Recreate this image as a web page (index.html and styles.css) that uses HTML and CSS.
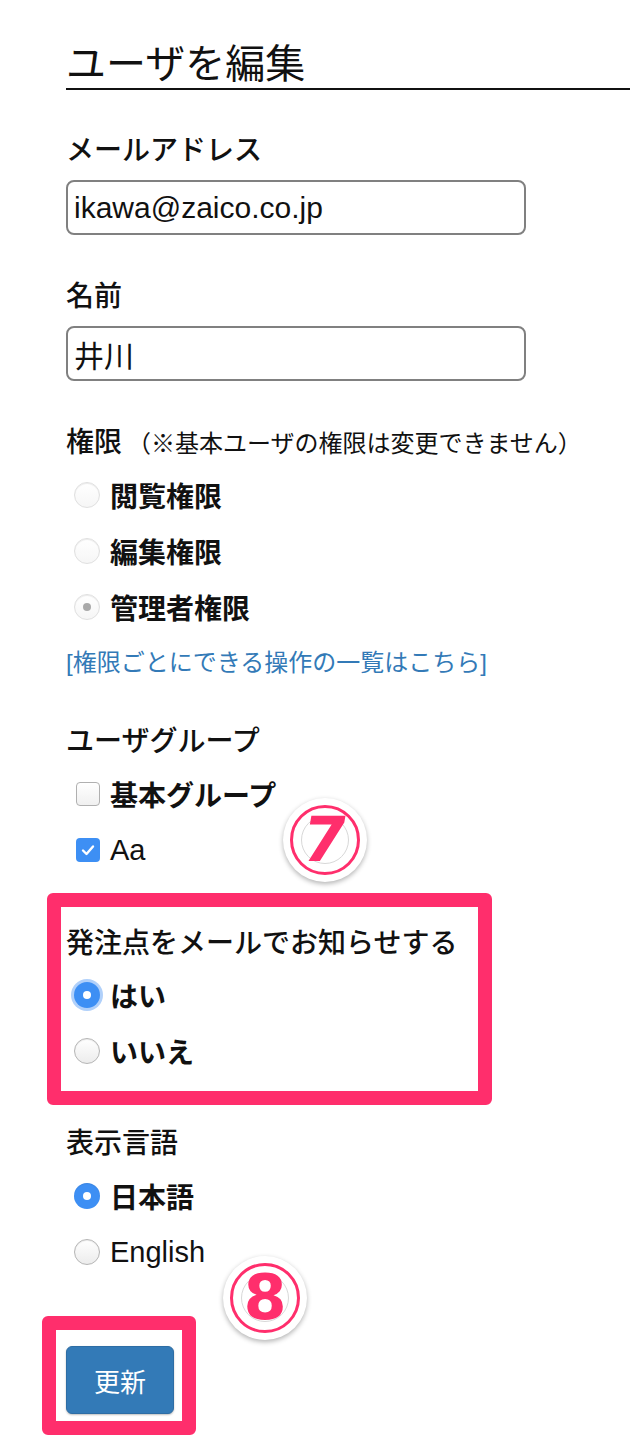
FILE: index.html
```html
<!DOCTYPE html>
<html lang="ja">
<head>
    <meta charset="UTF-8">
    <meta name="viewport" content="width=device-width, initial-scale=1.0">
    <title>ユーザを編集</title>
    <link rel="stylesheet" href="styles.css">
</head>
<body>

    <div class="page">
        <h1 class="title">ユーザを編集</h1>

        <!-- Email -->
        <div class="field field-email">
            <div class="label">メールアドレス</div>
            <input class="text-input" type="text" value="ikawa@zaico.co.jp">
        </div>

        <!-- Name -->
        <div class="field">
            <div class="label">名前</div>
            <input class="text-input" type="text" value="井川">
        </div>

        <!-- Role -->
        <div class="field">
            <div class="label">権限<span class="note">（※基本ユーザの権限は変更できません）</span></div>
            <div class="options tight">
                <div class="option"><span class="radio disabled"></span>閲覧権限</div>
                <div class="option"><span class="radio disabled"></span>編集権限</div>
                <div class="option"><span class="radio disabled checked"></span>管理者権限</div>
            </div>
            <a class="link" href="#">[権限ごとにできる操作の一覧はこちら]</a>
        </div>

        <!-- User groups -->
        <div class="field group-field">
            <div class="label">ユーザグループ</div>
            <div class="options">
                <div class="option"><span class="check"></span>基本グループ</div>
                <div class="option latin"><span class="check checked">
                    <svg width="16" height="16" viewBox="0 0 16 16"><path d="M3 8.5 L6.5 12 L13 4.5" fill="none" stroke="#fff" stroke-width="2.4" stroke-linecap="round" stroke-linejoin="round"/></svg>
                </span>Aa</div>
            </div>
            <div class="badge badge-7"><span class="badge-ring"></span><span class="badge-num skew">7</span></div>
        </div>

        <!-- Reorder point mail -->
        <div class="field highlight">
            <div class="label">発注点をメールでお知らせする</div>
            <div class="options tight">
                <div class="option"><span class="radio checked focus"></span>はい</div>
                <div class="option"><span class="radio"></span>いいえ</div>
            </div>
        </div>

        <!-- Language -->
        <div class="field field-lang">
            <div class="label">表示言語</div>
            <div class="options">
                <div class="option"><span class="radio checked"></span>日本語</div>
                <div class="option latin"><span class="radio"></span>English</div>
            </div>
        </div>

        <!-- Submit -->
        <div class="actions">
            <button class="btn">更新</button>
            <div class="badge badge-8"><span class="badge-ring"></span><span class="badge-num">8</span></div>
        </div>
    </div>

</body>
</html>
```

FILE: styles.css
```css
/* General styles */
body {
    margin: 0;
    font-family: "Liberation Sans", "Noto Sans CJK JP", sans-serif;
    color: #111;
    background-color: #fff;
}
.page {
    padding: 0 0 30px 66px;
}
.title {
    margin: 40px 0 0;
    font-size: 40px;
    font-weight: 400;
    line-height: 48px;
    border-bottom: 2px solid #111;
}

/* Form fields */
.field {
    position: relative;
    margin-top: 42px;
}
.field-email {
    margin-top: 41px;
}
.group-field {
    margin-top: 39px;
}
.highlight {
    margin-top: 46px;
}
.field-lang {
    margin-top: 45px;
}
.label {
    font-size: 28px;
    font-weight: 500;
    line-height: 40px;
}
.note {
    font-size: 24px;
    font-weight: 400;
    margin-left: 5px;
}
.text-input {
    display: block;
    box-sizing: border-box;
    width: 460px;
    height: 55px;
    margin-top: 9px;
    padding: 0 6px;
    border: 2px solid #808080;
    border-radius: 8px;
    font-family: "Liberation Sans", "Noto Sans CJK JP", sans-serif;
    font-size: 30px;
    color: #111;
}
.options {
    margin-top: 4px;
}
.options.tight {
    margin-top: 3px;
}
.option {
    display: flex;
    align-items: center;
    height: 56px;
    padding-left: 8px;
    font-size: 28px;
    font-weight: 700;
}
.option.latin {
    font-size: 29px;
    font-weight: 400;
}
.link {
    display: block;
    margin-top: 8px;
    font-size: 24px;
    line-height: 40px;
    color: #337ab7;
    text-decoration: none;
}

/* Radio buttons */
.radio {
    position: relative;
    box-sizing: border-box;
    width: 26px;
    height: 26px;
    margin-right: 10px;
    border: 1px solid #b5b5b5;
    border-radius: 50%;
    background: linear-gradient(#fff, #ececec);
    box-shadow: inset 0 1px 1px rgba(0, 0, 0, 0.08);
}
.radio.disabled {
    border-color: #e0e0e0;
    background: linear-gradient(#fff, #f6f6f6);
}
.radio.checked {
    border: none;
    background: #3d8ff4;
}
.radio.checked::after {
    content: "";
    position: absolute;
    top: 50%;
    left: 50%;
    width: 8px;
    height: 8px;
    margin: -4px 0 0 -4px;
    border-radius: 50%;
    background: #fff;
}
.radio.disabled.checked {
    border: 1px solid #e0e0e0;
    background: linear-gradient(#fff, #f6f6f6);
}
.radio.disabled.checked::after {
    background: #a9a9a9;
}
.radio.focus {
    box-shadow: 0 0 0 3px rgba(80, 150, 245, 0.45);
}

/* Checkboxes */
.check {
    box-sizing: border-box;
    display: flex;
    align-items: center;
    justify-content: center;
    width: 24px;
    height: 24px;
    margin-left: 2px;
    margin-right: 10px;
    border: 1px solid #b0b0b0;
    border-radius: 4px;
    background: linear-gradient(#fff, #f0f0f0);
}
.check.checked {
    border: none;
    background: #3d8ff4;
}

/* Submit button */
.actions {
    position: relative;
    display: inline-block;
    margin-top: 66px;
}
.btn {
    display: block;
    width: 108px;
    height: 68px;
    border: 1px solid #2e6da4;
    border-radius: 6px;
    background-color: #337ab7;
    color: #fff;
    font-family: "Liberation Sans", "Noto Sans CJK JP", sans-serif;
    font-size: 26px;
    box-shadow: 0 1px 2px rgba(0, 0, 0, 0.25);
}

/* Pink highlight frames */
.highlight::before,
.actions::before {
    content: "";
    position: absolute;
    box-sizing: border-box;
    border: 14px solid #ff2e6c;
    border-radius: 6px;
}
.highlight::before {
    top: -31px;
    left: -19px;
    width: 445px;
    height: 212px;
}
.actions::before {
    top: -30px;
    left: -24px;
    width: 154px;
    height: 119px;
}

/* Number badges */
.badge {
    position: absolute;
    width: 84px;
    height: 84px;
    border-radius: 50%;
    background: #fff;
    box-shadow: 0 2px 5px rgba(0, 0, 0, 0.3);
    display: flex;
    align-items: center;
    justify-content: center;
}
.badge-ring {
    position: absolute;
    top: 7px;
    left: 7px;
    width: 70px;
    height: 70px;
    box-sizing: border-box;
    border: 3px solid #ff2e6c;
    border-radius: 50%;
}
.badge-ring::after {
    content: "";
    position: absolute;
    top: 8px;
    left: 8px;
    right: 8px;
    bottom: 8px;
    border: 1px solid #d8d8d8;
    border-radius: 50%;
}
.badge-num {
    position: relative;
    font-family: "DejaVu Sans", sans-serif;
    font-weight: 700;
    font-size: 62px;
    line-height: 1;
    color: #ff2e6c;
}
.skew {
    transform: skewX(-10deg);
}
.badge-7 {
    top: 76px;
    left: 217px;
}
.badge-8 {
    top: -90px;
    left: 157px;
}
```
